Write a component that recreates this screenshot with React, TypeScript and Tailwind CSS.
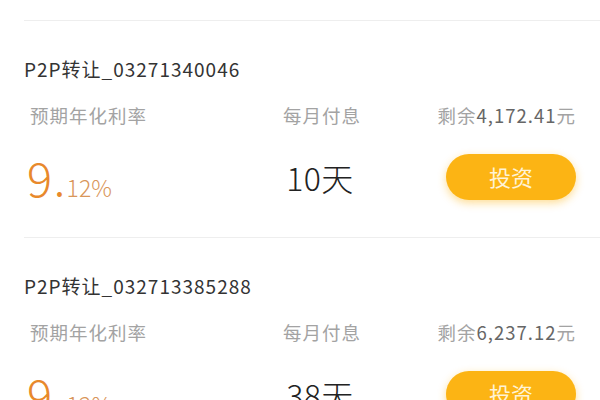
const items = [
  { id: "03271340046", rate: "9", frac: "12%", days: "10天", left: "4,172.41" },
  { id: "032713385288", rate: "9", frac: "12%", days: "38天", left: "6,237.12" },
];

function Item({ item }: { item: (typeof items)[number] }) {
  return (
    <div className="border-b border-[#eeeeee] pt-[36px] pb-[38px] pr-[24px]">
      <div className="text-[19px] leading-[24px] tracking-[1px] text-[#333333]">P2P转让_{item.id}</div>
      <div className="mt-[22px] grid grid-cols-[222px_140px_1fr] pl-[6px] text-[18.5px] leading-[24px] tracking-[1px] text-[#a3a3a3]">
        <div>预期年化利率</div>
        <div className="text-center">每月付息</div>
        <div className="text-right">
          剩余<span className="text-[#666666]">{item.left}</span>元
        </div>
      </div>
      <div className="mt-[26px] grid h-[46px] grid-cols-[222px_140px_1fr] items-center pl-[3px]">
        <div className="flex items-baseline text-[#e8892c]">
          <span className="text-[47px] font-light leading-none">{item.rate}</span>
          <span className="ml-[3px] text-[26px] font-bold leading-none">.</span>
          <span className="ml-[3px] text-[23px] font-light leading-none text-[#d9965a]">{item.frac}</span>
        </div>
        <div className="pl-[2px] text-center text-[32px] font-light leading-none tracking-[0.5px] text-[#222222]">{item.days}</div>
        <div className="flex justify-end">
          <button className="h-[46px] w-[130px] rounded-full bg-[#fcb414] text-[22px] text-[#fff3d6] shadow-[0_3px_8px_rgba(252,180,20,0.45)]">
            投资
          </button>
        </div>
      </div>
    </div>
  );
}

export default function App() {
  return (
    <div
      className="h-[400px] w-[600px] overflow-hidden bg-white"
      style={{ fontFamily: '"Noto Sans CJK SC", "Noto Sans", sans-serif' }}
    >
      <div className="pl-[24px]">
        <div className="h-[21px] border-b border-[#eeeeee]" />
        {items.map((item) => (
          <Item key={item.id} item={item} />
        ))}
      </div>
    </div>
  );
}
